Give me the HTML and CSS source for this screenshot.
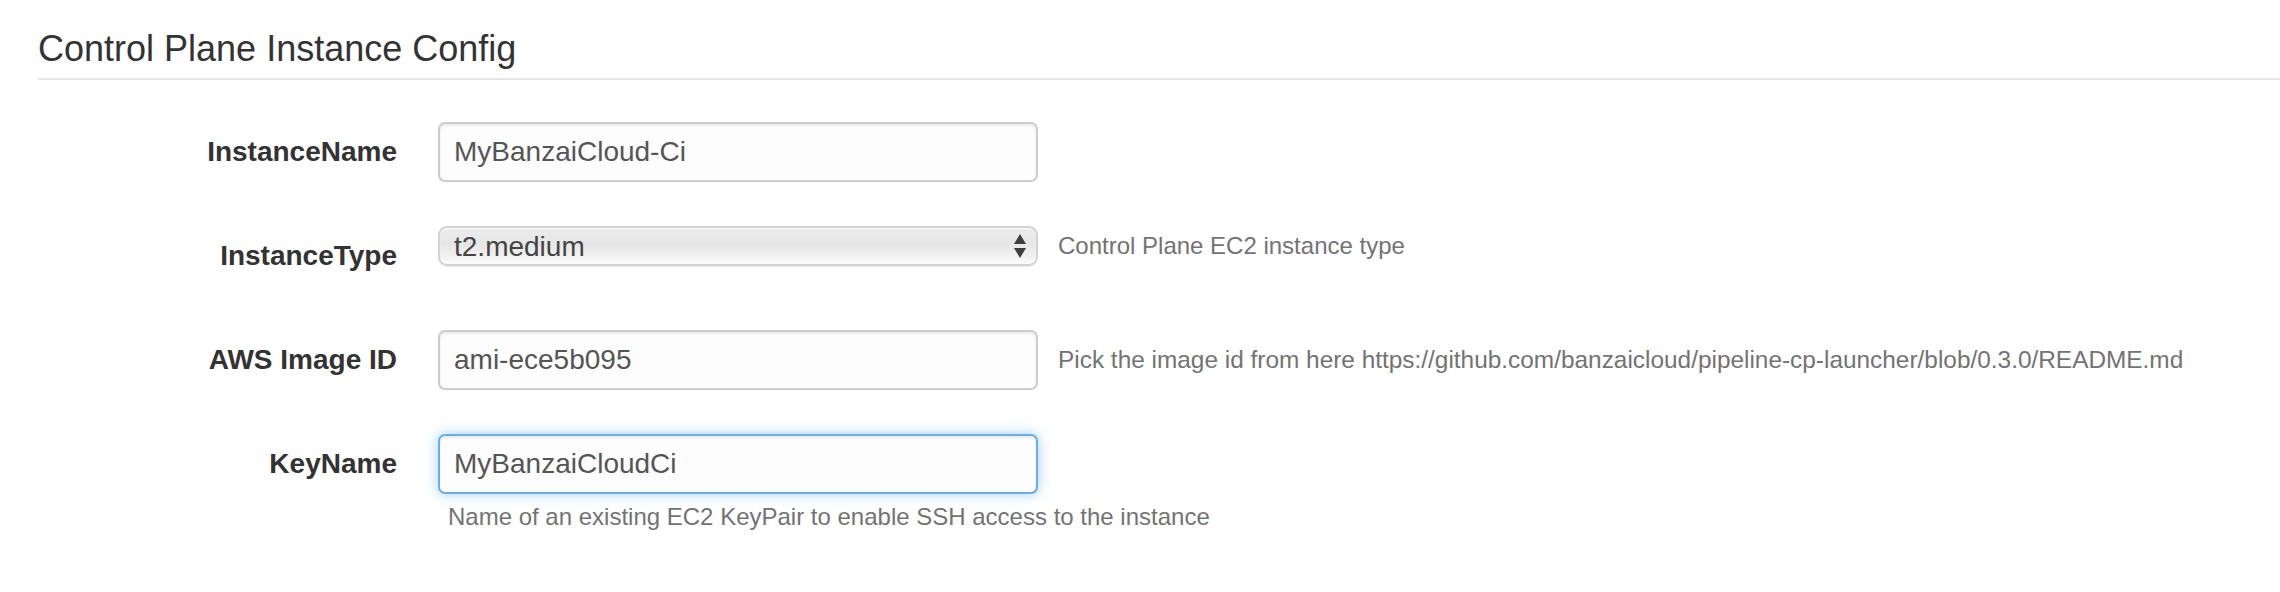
FILE: index.html
```html
<!DOCTYPE html>
<html>
<head>
<meta charset="utf-8">
<link rel="stylesheet" href="styles.css">
</head>
<body>
<div class="page">
  <h3 class="legend">Control Plane Instance Config</h3>
  <form class="form">
    <div class="row">
      <label class="label">InstanceName</label>
      <input class="control" type="text" value="MyBanzaiCloud-Ci">
    </div>
    <div class="row">
      <label class="label">InstanceType</label>
      <div class="select-wrap">
        <select class="select"><option>t2.medium</option></select>
        <svg class="arrows" width="14" height="26" viewBox="0 0 14 26"><path d="M7 1 L13 11 H1 Z M7 25 L13 15 H1 Z" fill="#3f3f3f"/></svg>
      </div>
      <div class="help help-side short">Control Plane EC2 instance type</div>
    </div>
    <div class="row">
      <label class="label">AWS Image ID</label>
      <input class="control" type="text" value="ami-ece5b095">
      <div class="help help-side long">Pick the image id from here https://github.com/banzaicloud/pipeline-cp-launcher/blob/0.3.0/README.md</div>
    </div>
    <div class="row">
      <label class="label">KeyName</label>
      <div class="stack">
        <input class="control focus" type="text" value="MyBanzaiCloudCi">
        <div class="help help-below">Name of an existing EC2 KeyPair to enable SSH access to the instance</div>
      </div>
    </div>
  </form>
</div>
</body>
</html>
```
FILE: styles.css
```css
html, body {
  margin: 0;
  padding: 0;
  background: #ffffff;
}
.page {
  padding-left: 38px;
  font-family: "Liberation Sans", Arial, Helvetica, sans-serif;
  color: #333333;
}
.legend {
  margin: 29px 0 0 0;
  font-size: 36px;
  font-weight: normal;
  line-height: 40px;
  padding-bottom: 9px;
  border-bottom: 2px solid #e5e5e5;
  color: #333333;
}
.form {
  margin-top: 42px;
}
.row {
  display: grid;
  grid-template-columns: 380px 600px 1fr;
  column-gap: 20px;
  align-items: start;
  margin-bottom: 44px;
}
.label {
  padding-right: 21px;
  text-align: right;
  font-weight: bold;
  font-size: 28px;
  line-height: 60px;
  color: #333333;
}
.control {
  box-sizing: border-box;
  width: 600px;
  height: 60px;
  margin: 0;
  padding: 0 14px;
  font-family: "Liberation Sans", Arial, Helvetica, sans-serif;
  font-size: 28px;
  color: #555555;
  background: #fdfdfd;
  border: 2px solid #cccccc;
  border-radius: 7px;
  box-shadow: inset 0 2px 3px rgba(0, 0, 0, 0.075);
  outline: none;
}
.control.focus {
  border-color: #66afe9;
  box-shadow: inset 0 2px 2px rgba(0, 0, 0, 0.075), 0 0 14px rgba(102, 175, 233, 0.6);
}
.select-wrap {
  position: relative;
  width: 600px;
  height: 40px;
}
.select {
  -webkit-appearance: none;
  appearance: none;
  box-sizing: border-box;
  width: 600px;
  height: 40px;
  margin: 0;
  padding: 0 14px;
  font-family: "Liberation Sans", Arial, Helvetica, sans-serif;
  font-size: 28px;
  color: #444444;
  border: 2px solid #d2d2d2;
  border-radius: 9px;
  background: linear-gradient(#ececec 0%, #e6e6e6 45%, #f2f2f2 80%, #fbfbfb 100%);
  box-shadow: inset 0 1px 1px #ffffff, 0 1px 1px rgba(0, 0, 0, 0.08);
  outline: none;
}
.arrows {
  position: absolute;
  right: 11px;
  top: 7px;
}
.help {
  font-size: 24px;
  color: #737373;
}
.help-side {
  line-height: 60px;
  white-space: nowrap;
}
.help-side.short {
  line-height: 40px;
}
.help-side.long {
  font-size: 24.4px;
}
.stack {
  display: flex;
  flex-direction: column;
}
.help-below {
  margin-top: 6px;
  padding-left: 10px;
  line-height: 34px;
  white-space: nowrap;
}
```
